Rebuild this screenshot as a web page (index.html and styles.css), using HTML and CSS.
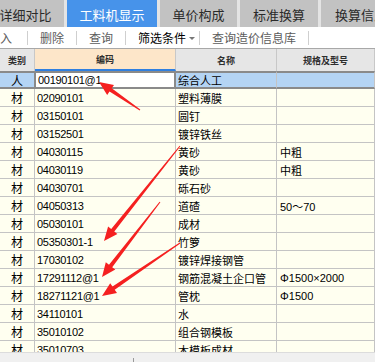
FILE: index.html
```html
<!DOCTYPE html>
<html lang="zh-CN">
<head>
    <meta charset="UTF-8">
    <meta name="viewport" content="width=device-width, initial-scale=1.0">
    <title>工料机显示</title>
    <link rel="stylesheet" href="styles.css">
</head>
<body>
    <div class="tabs">
        <div class="tab tab-first">详细对比</div>
        <div class="tab tab-active">工料机显示</div>
        <div class="tab tab-mid">单价构成</div>
        <div class="tab tab-mid2">标准换算</div>
        <div class="tab tab-last">换算信息</div>
    </div>

    <div class="toolbar">
        <span class="tool tool-first">导入</span>
        <span class="sep"></span>
        <span class="tool">删除</span>
        <span class="sep"></span>
        <span class="tool">查询</span>
        <span class="sep"></span>
        <span class="tool tool-drop">筛选条件<i class="caret"></i></span>
        <span class="sep"></span>
        <span class="tool">查询造价信息库</span>
        <span class="sep"></span>
    </div>

    <div class="grid-head">
        <div class="hcell">类别</div>
        <div class="hcell hcell-code">编码</div>
        <div class="hcell">名称</div>
        <div class="hcell">规格及型号</div>
    </div>

    <div class="grid-body">
        <div class="row row-sel">
            <div class="cell c-type">人</div>
            <div class="cell c-code">00190101@1</div>
            <div class="cell c-name">综合人工</div>
            <div class="cell c-spec"></div>
        </div>
        <div class="row"><div class="cell c-type">材</div><div class="cell c-code">02090101</div><div class="cell c-name">塑料薄膜</div><div class="cell c-spec"></div></div>
        <div class="row"><div class="cell c-type">材</div><div class="cell c-code">03150101</div><div class="cell c-name">圆钉</div><div class="cell c-spec"></div></div>
        <div class="row"><div class="cell c-type">材</div><div class="cell c-code">03152501</div><div class="cell c-name">镀锌铁丝</div><div class="cell c-spec"></div></div>
        <div class="row"><div class="cell c-type">材</div><div class="cell c-code">04030115</div><div class="cell c-name">黄砂</div><div class="cell c-spec">中粗</div></div>
        <div class="row"><div class="cell c-type">材</div><div class="cell c-code">04030119</div><div class="cell c-name">黄砂</div><div class="cell c-spec">中粗</div></div>
        <div class="row"><div class="cell c-type">材</div><div class="cell c-code">04030701</div><div class="cell c-name">砾石砂</div><div class="cell c-spec"></div></div>
        <div class="row"><div class="cell c-type">材</div><div class="cell c-code">04050313</div><div class="cell c-name">道碴</div><div class="cell c-spec num">50～70</div></div>
        <div class="row"><div class="cell c-type">材</div><div class="cell c-code">05030101</div><div class="cell c-name">成材</div><div class="cell c-spec"></div></div>
        <div class="row"><div class="cell c-type">材</div><div class="cell c-code">05350301-1</div><div class="cell c-name">竹箩</div><div class="cell c-spec"></div></div>
        <div class="row"><div class="cell c-type">材</div><div class="cell c-code">17030102</div><div class="cell c-name">镀锌焊接钢管</div><div class="cell c-spec"></div></div>
        <div class="row"><div class="cell c-type">材</div><div class="cell c-code">17291112@1</div><div class="cell c-name">钢筋混凝土企口管</div><div class="cell c-spec num">Φ1500×2000</div></div>
        <div class="row"><div class="cell c-type">材</div><div class="cell c-code">18271121@1</div><div class="cell c-name">管枕</div><div class="cell c-spec num">Φ1500</div></div>
        <div class="row"><div class="cell c-type">材</div><div class="cell c-code">34110101</div><div class="cell c-name">水</div><div class="cell c-spec"></div></div>
        <div class="row"><div class="cell c-type">材</div><div class="cell c-code">35010102</div><div class="cell c-name">组合钢模板</div><div class="cell c-spec"></div></div>
        <div class="row"><div class="cell c-type">材</div><div class="cell c-code">35010703</div><div class="cell c-name">木模板成材</div><div class="cell c-spec"></div></div>
    </div>

    <div class="hscroll"><span class="grip"></span></div>

    <!-- red markup arrows drawn over the screenshot -->
    <svg class="arrows" width="375" height="363" viewBox="0 0 375 363">
        <polygon points="140.3,109.6 111.7,88.2 114,84.9 99,82 107.2,94.9 109.5,91.6 139.7,110.4"/>
        <polygon points="180.4,146.3 114.3,231.4 117.4,233.9 104,241 108.1,226.4 111.2,228.9 179.6,145.7"/>
        <polygon points="160.4,202.3 112.2,267.2 115.3,269.6 102,277 105.8,262.3 109,264.7 159.6,201.7"/>
        <polygon points="180.3,243.4 114.7,289.8 117,293.1 102,296 110.2,283.2 112.5,286.5 179.7,242.6"/>
    </svg>
</body>
</html>
```

FILE: styles.css
```css
* {
    margin: 0;
    padding: 0;
    box-sizing: border-box;
}

body {
    width: 375px;
    height: 363px;
    overflow: hidden;
    position: relative;
    background: #fff;
    font-family: "Liberation Sans", "Noto Sans CJK SC", sans-serif;
    color: #000;
}

/* tabs */
.tabs {
    display: flex;
    gap: 3px;
    height: 27px;
    background: #e4e4e4;
    margin-left: -13px;
    white-space: nowrap;
}

.tab {
    flex: none;
    display: flex;
    align-items: center;
    justify-content: center;
    padding-top: 2px;
    background: #c2c2c2;
    color: #2a2a2a;
    font-family: "Noto Sans CJK SC", sans-serif;
    font-size: 13px;
}

.tab-first { width: 77px; }
.tab-active { width: 90px; background: #4793ea; color: #fff; }
.tab-mid { width: 77px; }
.tab-mid2 { width: 78px; }
.tab-last { width: 80px; }

/* toolbar */
.toolbar {
    display: flex;
    align-items: center;
    height: 22px;
    margin-left: -24px;
    white-space: nowrap;
    border-bottom: 1px solid #a8a8a8;
}

.tool {
    display: flex;
    align-items: center;
    padding: 0 12px;
    color: #5c5c5c;
    font-family: "Noto Sans CJK SC", sans-serif;
    font-size: 12px;
    line-height: 16px;
}

.tool-first { padding-right: 15px; }

.tool-drop {
    color: #000;
    padding-right: 4px;
}

.caret {
    margin-left: 3px;
    margin-top: 1px;
    border-left: 3px solid transparent;
    border-right: 3px solid transparent;
    border-top: 3px solid #777;
}

.sep {
    width: 1px;
    height: 14px;
    background: #cfcfcf;
}

/* grid */
.grid-head,
.row {
    display: grid;
    grid-template-columns: 35px 141px 101px 98px;
}

.grid-head {
    height: 22px;
    background: #e6e6e6;
}

.hcell {
    display: flex;
    align-items: center;
    justify-content: center;
    border-right: 1px solid #c8c8c8;
    font-family: "Noto Sans CJK SC", sans-serif;
    font-size: 9px;
    font-weight: 700;
    color: #2e2e2e;
}

.hcell-code {
    background: #fde6c9;
    border-bottom: 2px solid #2f7fe0;
}

.grid-body {
    height: 281px;
    overflow: hidden;
}

.row {
    height: 18px;
    background: #fffff0;
}

.cell {
    display: flex;
    align-items: center;
    border-right: 1px solid #c4c4c4;
    border-bottom: 1px solid #c4c4c4;
    overflow: hidden;
    white-space: nowrap;
}

.c-type {
    justify-content: center;
    font-family: "Noto Sans CJK SC", sans-serif;
    font-size: 12px;
}

.c-code {
    padding-left: 2px;
    font-size: 11px;
    letter-spacing: -0.3px;
}

.c-name {
    padding-left: 2px;
    font-family: "Noto Sans CJK SC", sans-serif;
    font-size: 11px;
}

.c-spec {
    padding-left: 3px;
    font-family: "Noto Sans CJK SC", sans-serif;
    font-size: 11px;
}

.c-spec.num {
    font-family: "Liberation Sans", "Noto Sans CJK SC", sans-serif;
    font-size: 11px;
}

.row-sel .cell {
    background: #b4d4f4;
    border-top: 2px solid #8a8a8a;
    border-bottom: 2px solid #8a8a8a;
}

.row-sel .c-code {
    background: #fff;
    border-left: 2px solid #8a8a8a;
    border-right: 2px solid #8a8a8a;
    margin-left: -1px;
}

/* bottom scrollbar */
.hscroll {
    height: 10px;
    background: #f0f0f0;
    border-top: 1px solid #dcdcdc;
    padding-left: 133px;
    padding-top: 5px;
}

.grip {
    display: block;
    width: 1px;
    height: 4px;
    background: #999;
}

.arrows {
    position: absolute;
    top: 0;
    left: 0;
    pointer-events: none;
}

.arrows polygon {
    fill: #f52020;
}
```
